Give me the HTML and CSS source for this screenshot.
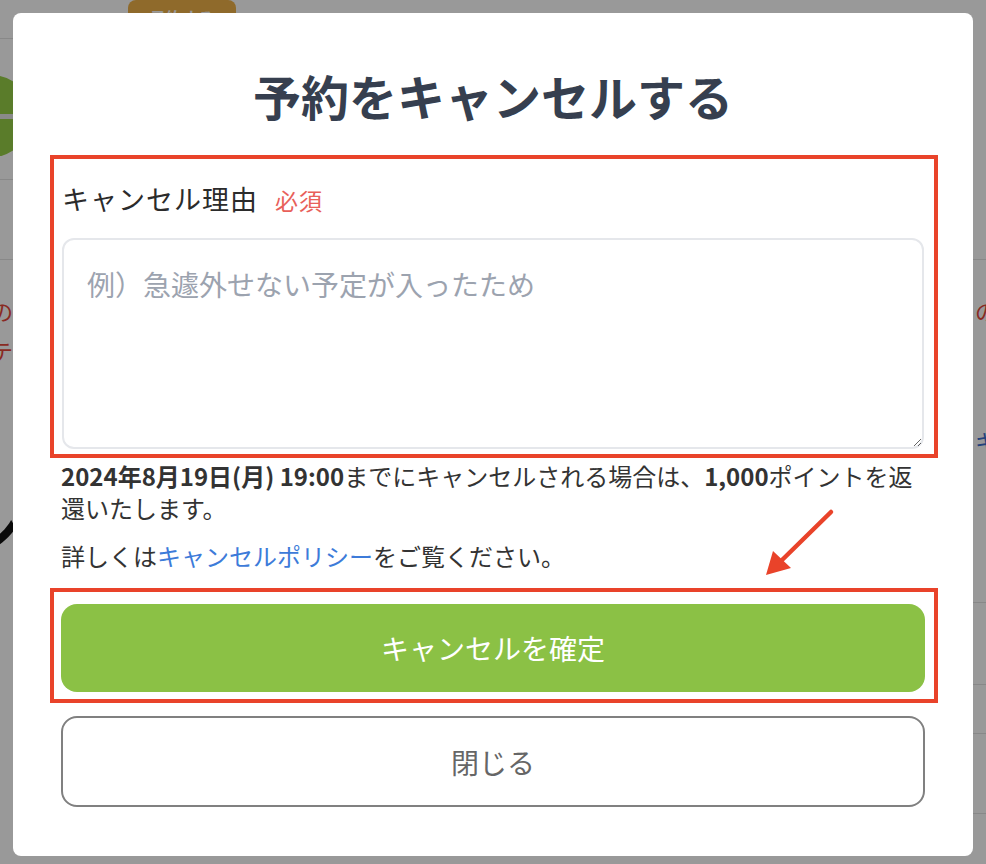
FILE: index.html
```html
<!DOCTYPE html>
<html lang="ja">
<head>
<meta charset="utf-8">
<title>予約をキャンセルする</title>
<link rel="stylesheet" href="styles.css">
</head>
<body>
<div class="page">
  <div class="col-left">
    <div class="l-head"><span class="l-btn">予約する</span></div>
    <div class="l-hero"><span class="logo"></span></div>
    <div class="l-band"></div>
    <div class="l-notes">
      <p class="note red shift">の注意事項</p>
      <p class="note red shift">テスト</p>
      <p class="big shift">シ</p>
    </div>
  </div>
  <div class="col-right">
    <div class="r-top"></div>
    <div class="r-notes">
      <p class="note red">の注意事項</p>
      <p class="note blue link-gap">キャンセル</p>
    </div>
    <ul class="r-list">
      <li class="r-item first"></li>
      <li class="r-item tall"></li>
      <li class="r-item"></li>
      <li class="r-item tall2"></li>
    </ul>
  </div>
</div>

<div class="backdrop">
  <div class="modal">
    <h1 class="modal-title">予約をキャンセルする</h1>

    <div class="highlight field-box">
      <div class="field-label">
        <span class="label-text">キャンセル理由</span>
        <span class="required">必須</span>
      </div>
      <textarea class="reason" placeholder="例）急遽外せない予定が入ったため"></textarea>
    </div>

    <p class="notice first-notice"><strong>2024年8月19日(月) 19:00</strong>までにキャンセルされる場合は、<strong>1,000</strong>ポイントを返還いたします。</p>
    <p class="notice second-notice">詳しくは<a class="policy-link" href="#">キャンセルポリシー</a>をご覧ください。</p>

    <div class="highlight button-box">
      <button class="btn-confirm" type="button">キャンセルを確定</button>
    </div>
    <button class="btn-close" type="button">閉じる</button>

    <svg class="arrow" width="80" height="75" viewBox="0 0 80 75" aria-hidden="true">
      <line x1="72" y1="7" x2="21" y2="57" stroke="#e9432a" stroke-width="4.5" stroke-linecap="round"/>
      <polygon points="7,70 14,46 32,63" fill="#e9432a"/>
    </svg>
  </div>
</div>
</body>
</html>
```

FILE: styles.css
```css
* { box-sizing: border-box; }

html, body {
  margin: 0;
  padding: 0;
  width: 986px;
  height: 864px;
  overflow: hidden;
  background: #fff;
  font-family: "Noto Sans CJK JP", "Noto Sans", sans-serif;
  color: #333;
}

/* ---------- underlying page ---------- */
.page {
  display: grid;
  grid-template-columns: 480px 506px;
  width: 986px;
  height: 864px;
  overflow: hidden;
}

.l-head {
  height: 39px;
  border-bottom: 1px solid #e3e3e3;
  overflow: hidden;
}
.l-btn {
  display: block;
  width: 108px;
  height: 34px;
  margin-left: 128px;
  background: #eeb148;
  border-radius: 8px;
  color: #fff;
  font-size: 16px;
  font-weight: 700;
  text-align: center;
  line-height: 34px;
}
.l-hero {
  height: 141px;
  border-bottom: 1px solid #e3e3e3;
  padding-top: 36px;
  overflow: hidden;
}
.logo {
  display: block;
  width: 82px;
  height: 82px;
  margin-left: -50px;
  border-radius: 50%;
  background: linear-gradient(#96cf46 0 48%, #e6e6e6 48% 54%, #96cf46 54% 100%);
}
.l-band {
  height: 80px;
  border-bottom: 1px solid #e3e3e3;
}
.l-notes { padding-top: 30px; }

.note {
  margin: 0;
  font-size: 22px;
  line-height: 40px;
  white-space: nowrap;
}
.red { color: #e5473a; }
.blue { color: #3d6fd0; }
.shift { margin-left: -9px; }
.big {
  margin: 118px 0 0 -40px;
  font-size: 60px;
  line-height: 80px;
  font-weight: 700;
  color: #111;
}

.r-top {
  height: 260px;
  border-bottom: 1px solid #e3e3e3;
}
.r-notes {
  padding-top: 30px;
  padding-left: 495px;
  overflow: hidden;
}
.link-gap { margin-top: 90px; }

.r-list {
  list-style: none;
  margin: 0;
  padding: 0;
}
.r-item {
  height: 49px;
  border-bottom: 1px solid #e3e3e3;
}
.r-item.first { margin-top: 142px; height: 1px; }
.r-item.tall { height: 82px; }
.r-item.tall2 { height: 80px; }

/* ---------- modal ---------- */
.backdrop {
  position: fixed;
  inset: 0;
  background: rgba(0, 0, 0, 0.4);
  display: flex;
  justify-content: center;
  align-items: flex-start;
  padding-top: 13px;
}

.modal {
  position: relative;
  width: 960px;
  background: #fff;
  border-radius: 8px;
  padding: 47px 48px 49px;
}

.modal-title {
  margin: 0 0 23px;
  text-align: center;
  font-size: 48px;
  line-height: 70px;
  padding-bottom: 2px;
  font-weight: 700;
  color: #363f4f;
}

.highlight {
  border: 4px solid #e9432a;
  margin: 0 -13px 0 -11px;
}

.field-box { padding: 20px 10px 5px 8px; }

.field-label {
  display: flex;
  align-items: baseline;
  line-height: 40px;
}
.label-text {
  font-size: 27px;
  letter-spacing: 1px;
  color: #2b2b2b;
}
.required {
  margin-left: 17px;
  font-size: 23px;
  letter-spacing: 1px;
  color: #e8605a;
}

.reason {
  display: block;
  width: 100%;
  height: 211px;
  margin-top: 18px;
  border: 2px solid #e5e7eb;
  border-radius: 12px;
  padding: 23px 23px 17px;
  font-family: inherit;
  font-size: 28px;
  line-height: 42px;
  color: #333;
  background: #fff;
  resize: vertical;
  outline: none;
}
.reason::placeholder { color: #9ca3af; }

.notice {
  margin: 0;
  font-size: 24px;
  line-height: 32px;
  color: #333;
}
.notice strong { font-weight: 700; }
.first-notice { margin-top: 2px; }
.second-notice { margin-top: 16px; }

.policy-link {
  color: #3d7bd9;
  text-decoration: none;
}

.button-box {
  margin-top: 16px;
  padding: 12px 9px 7px 7px;
}

.btn-confirm,
.btn-close {
  display: block;
  width: 100%;
  font-family: inherit;
  font-size: 28px;
  cursor: pointer;
}

.btn-confirm {
  height: 88px;
  border: 0;
  border-radius: 16px;
  background: #8bc145;
  color: #fff;
  font-weight: 400;
}

.btn-close {
  height: 91px;
  margin-top: 13px;
  border: 2px solid #808080;
  border-radius: 16px;
  background: #fff;
  color: #666;
  font-weight: 400;
}

.arrow {
  position: absolute;
  left: 746px;
  top: 492px;
}
```
